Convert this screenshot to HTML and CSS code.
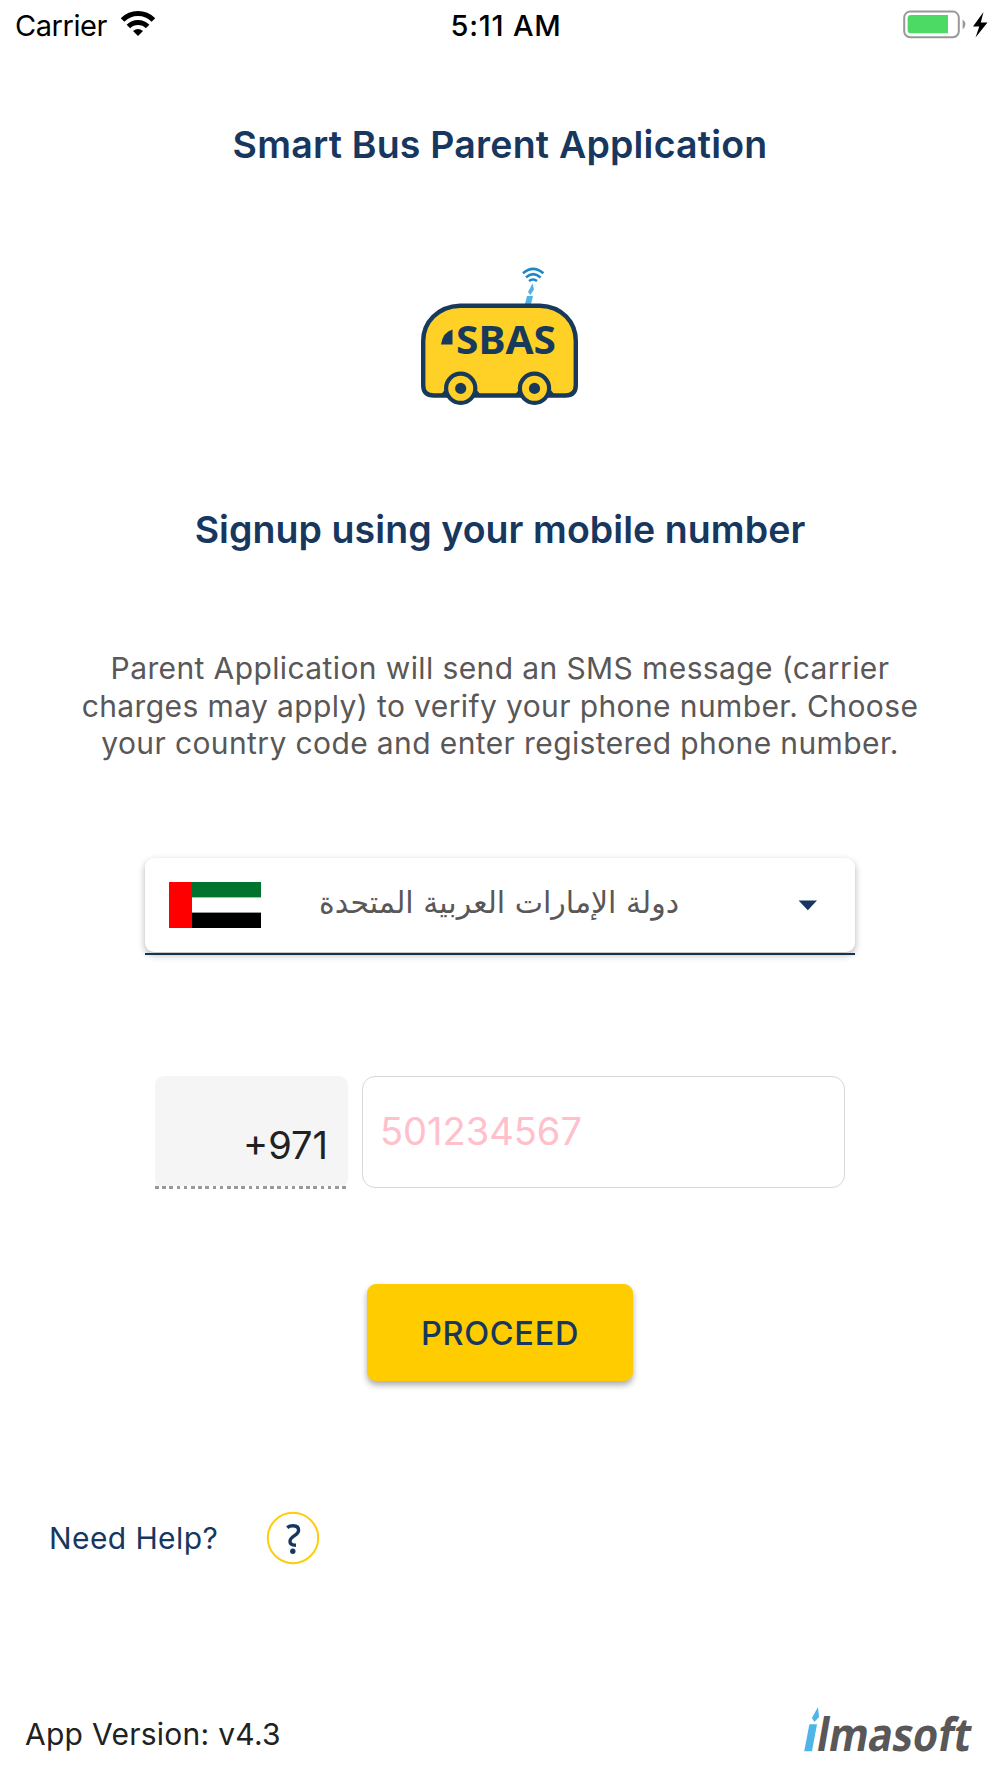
FILE: index.html
```html
<!DOCTYPE html>
<html lang="en">
<head>
    <meta charset="utf-8">
    <title>Smart Bus Parent Application</title>
    <meta name="viewport" content="width=device-width, initial-scale=1">
    <link rel="stylesheet" href="styles.css">
</head>

<body>
    <header class="status-bar">
        <div class="status-left">
            <span class="carrier">Carrier</span>
            <svg class="wifi" width="34" height="25" viewBox="0 0 34 25">
                <path d="M1.6 9 A21.5 21.5 0 0 1 32.4 9" fill="none" stroke="#000" stroke-width="5"/>
                <path d="M7.4 15.6 A13.5 13.5 0 0 1 26.6 15.6" fill="none" stroke="#000" stroke-width="5"/>
                <path d="M12 20 Q17 15.8 22 20 L17 25 Z"/>
            </svg>
        </div>
        <span class="time">5:11 AM</span>
        <div class="status-right">
            <svg width="86" height="30" viewBox="0 0 86 30">
                <rect x="1.2" y="1.6" width="54.6" height="25.6" rx="6" fill="#fff" stroke="#989898" stroke-width="2"/>
                <path d="M8 5 H45 V23.3 H8 Q4.6 23.3 4.6 19.9 V8.4 Q4.6 5 8 5 Z" fill="#4cd964"/>
                <path d="M59.6 9.3 Q65.4 14.4 59.6 19.5 Z" fill="#989898"/>
                <path d="M80.5 2 L70 16.5 H76.3 L72.5 27.5 L84.5 12.5 H77.8 Z"/>
            </svg>
        </div>
    </header>

    <main>
        <h1>Smart Bus Parent Application</h1>

        <svg class="bus" width="160" height="140" viewBox="0 0 160 140">
            <!-- antenna -->
            <g fill="none" stroke="#1c86c9" stroke-width="2.6">
                <path d="M103 8.2 Q113 -0.6 123.4 8.2"/>
                <path d="M106 12.4 Q113 6 120.6 12.4"/>
                <path d="M109 16 Q113 13 117 16"/>
            </g>
            <path d="M112.6 18.2 L114 24.5 L110.4 30 L108 27 Z M107 31 H113 L111 39 H105 Z" fill="#50b3e6"/>
            <!-- body -->
            <path d="M40 40.7 H120 C142 41.5 155.8 57 155.8 76 V120 Q155.8 130.5 145.3 130.5 H14 Q3.2 130.5 3.2 120 V76 C3.2 57 18 41.5 40 40.7 Z" fill="#ffd026" stroke="#17395c" stroke-width="4.4"/>
            <path d="M19 132 L25.5 124 H56 L62.5 132 Z M93 132 L99.5 124 H130 L136.5 132 Z" fill="#17395c"/>
            <g fill="#ffd026" stroke="#17395c" stroke-width="4.2">
                <circle cx="40.7" cy="123.3" r="14.6"/>
                <circle cx="114.5" cy="123.3" r="14.6"/>
            </g>
            <g fill="#17395c">
                <circle cx="40.7" cy="123.4" r="5.6"/>
                <circle cx="114.5" cy="123.4" r="5.6"/>
                <path d="M32.5 64.5 V79.5 H21 Q23 67 32.5 64.5 Z"/>
                <text x="36" y="89" textLength="100" lengthAdjust="spacingAndGlyphs">SBAS</text>
            </g>
        </svg>

        <h2>Signup using your mobile number</h2>

        <p class="info">
            Parent Application will send an SMS message (carrier<br>
            charges may apply) to verify your phone number. Choose<br>
            your country code and enter registered phone number.
        </p>

        <div class="country">
            <svg class="flag" width="92" height="46" viewBox="0 0 92 46">
                <rect width="92" height="46" fill="#fff"/>
                <rect width="92" height="15.4" fill="#00732f"/>
                <rect y="30.6" width="92" height="15.4"/>
                <rect width="23" height="46" fill="#f00"/>
            </svg>
            <span class="country-name" lang="ar" dir="rtl">دولة الإمارات العربية المتحدة</span>
            <svg class="caret" width="20" height="11" viewBox="0 0 20 11"><path d="M0.6 0.6 H19 L9.8 10.2 Z" fill="#17375e"/></svg>
        </div>

        <div class="phone">
            <div class="code"><span>+971</span></div>
            <div class="number"><span>501234567</span></div>
        </div>

        <button class="proceed">PROCEED</button>

        <div class="help">
            <span class="help-text">Need Help?</span>
            <svg width="54" height="54" viewBox="0 0 54 54">
                <circle cx="27" cy="27" r="25.2" fill="#fff" stroke="#ffcc0c" stroke-width="2"/>
                <path d="M21.2 16.6 Q23.5 14.8 27 14.8 Q32.6 14.8 32.6 19.2 Q32.6 22 28.5 24.6 Q24 27.5 24 30.4 Q24 34 30 34.2" fill="none" stroke="#17375e" stroke-width="3.4"/>
                <circle cx="26.8" cy="40.2" r="2.7" fill="#17375e"/>
            </svg>
        </div>
    </main>

    <footer>
        <span class="version">App Version: v4.3</span>
        <svg class="logo" width="180" height="70" viewBox="0 -6 180 70">
            <path d="M18 0 L19 10 L14.4 15 L11.9 11 Z M9.4 17.3 H17 L12 44.3 H4.2 Z" fill="#4fb4e6"/>
            <text transform="translate(15 44.3) skewX(-10)" textLength="154" lengthAdjust="spacingAndGlyphs">lmasoft</text>
        </svg>
    </footer>
</body>
</html>
```

FILE: styles.css
```css
* {box-sizing: border-box}
body {
    margin: 0;
    height: 1778px;
    display: flex;
    flex-direction: column;
    background: #fff;
    font-family: Inter, "Liberation Sans", sans-serif;
    color: #17375e;
    overflow: hidden;
}

/* Status bar */
.status-bar {
    display: grid;
    grid-template-columns: 1fr auto 1fr;
    height: 53px;
    padding: 10px 11px 0 15px;
    color: #000;
    font-size: 29px;
    line-height: 31px;
}
.status-left {display: flex}
.carrier {letter-spacing: -0.45px}
.wifi {margin-left: 14px; margin-top: 1px}
.time {font-weight: 500; margin-left: 8px; letter-spacing: 0.8px}
.status-right {display: flex; justify-content: flex-end}

/* Page content */
main {
    display: flex;
    flex-direction: column;
    align-items: center;
}
h1, h2 {
    margin: 0;
    font-size: 37.5px;
    font-weight: 600;
    line-height: 48px;
    white-space: nowrap;
}
h1 {margin-top: 68px; letter-spacing: 0.2px}
.bus {margin-top: 96px}
.bus text {font: bold 39px "Noto Sans", sans-serif}
h2 {margin-top: 101px; letter-spacing: 0.07px}

.info {
    height: 113px;
    margin: 96px 0 0;
    color: #595757;
    font-size: 30px;
    line-height: 37.6px;
    letter-spacing: 0.39px;
    text-align: center;
    white-space: nowrap;
}

/* Country picker */
.country {
    display: flex;
    align-items: center;
    width: 710px;
    height: 94px;
    margin-top: 95px;
    padding: 0 37px 0 24px;
    border-radius: 9px;
    box-shadow: 0 3px 7px rgba(0, 0, 0, 0.3);
    background: #fff;
    position: relative;
}
.country::after {
    content: "";
    position: absolute;
    left: 0;
    right: 0;
    bottom: -3px;
    height: 2.5px;
    background: #0f3350;
}
.country-name {
    flex: 1;
    padding: 0 61px 5px 0;
    text-align: center;
    color: #595757;
    font: 30px "DejaVu Sans", sans-serif;
}
.caret {margin-top: 1px}

/* Phone number */
.phone {
    display: flex;
    gap: 14px;
    margin-top: 124px;
    font-size: 38px;
}
.code {
    display: flex;
    justify-content: flex-end;
    width: 193px;
    height: 112px;
    padding: 46px 20px 0 0;
    border-radius: 9px;
    background: #f5f5f5;
    color: #212121;
    line-height: 46px;
    position: relative;
}
.code::after {
    content: "";
    position: absolute;
    left: 0;
    right: 0;
    bottom: -1px;
    height: 3px;
    background: repeating-linear-gradient(90deg, #999 0 3.6px, #fff 3.6px 7.2px);
}
.number {
    width: 483px;
    height: 112px;
    padding: 31px 17px;
    border: 1px solid #d8d8d8;
    border-radius: 13px;
    color: #ffc0cb;
    line-height: 46px;
}

.proceed {
    width: 266px;
    height: 97px;
    margin-top: 96px;
    padding-top: 3px;
    border: none;
    border-radius: 9px;
    background: #fc0;
    box-shadow: 0 4px 6px rgba(0, 0, 0, 0.33);
    color: #17375e;
    font: 500 32.5px Inter, sans-serif;
    letter-spacing: 0.7px;
}

/* Help */
.help {
    display: flex;
    align-items: center;
    align-self: flex-start;
    gap: 48px;
    margin: 130px 0 0 49px;
    font-size: 30px;
    letter-spacing: 0.4px;
}

/* Footer */
footer {
    display: flex;
    justify-content: space-between;
    align-items: flex-start;
    height: 77px;
    margin-top: auto;
    padding: 0 20px 0 25px;
    color: #212121;
    font-size: 30px;
    line-height: 66px;
}
.version {letter-spacing: 0.27px}
.logo text {
    fill: #595757;
    font: bold 46px "Noto Sans", sans-serif;
}
```
